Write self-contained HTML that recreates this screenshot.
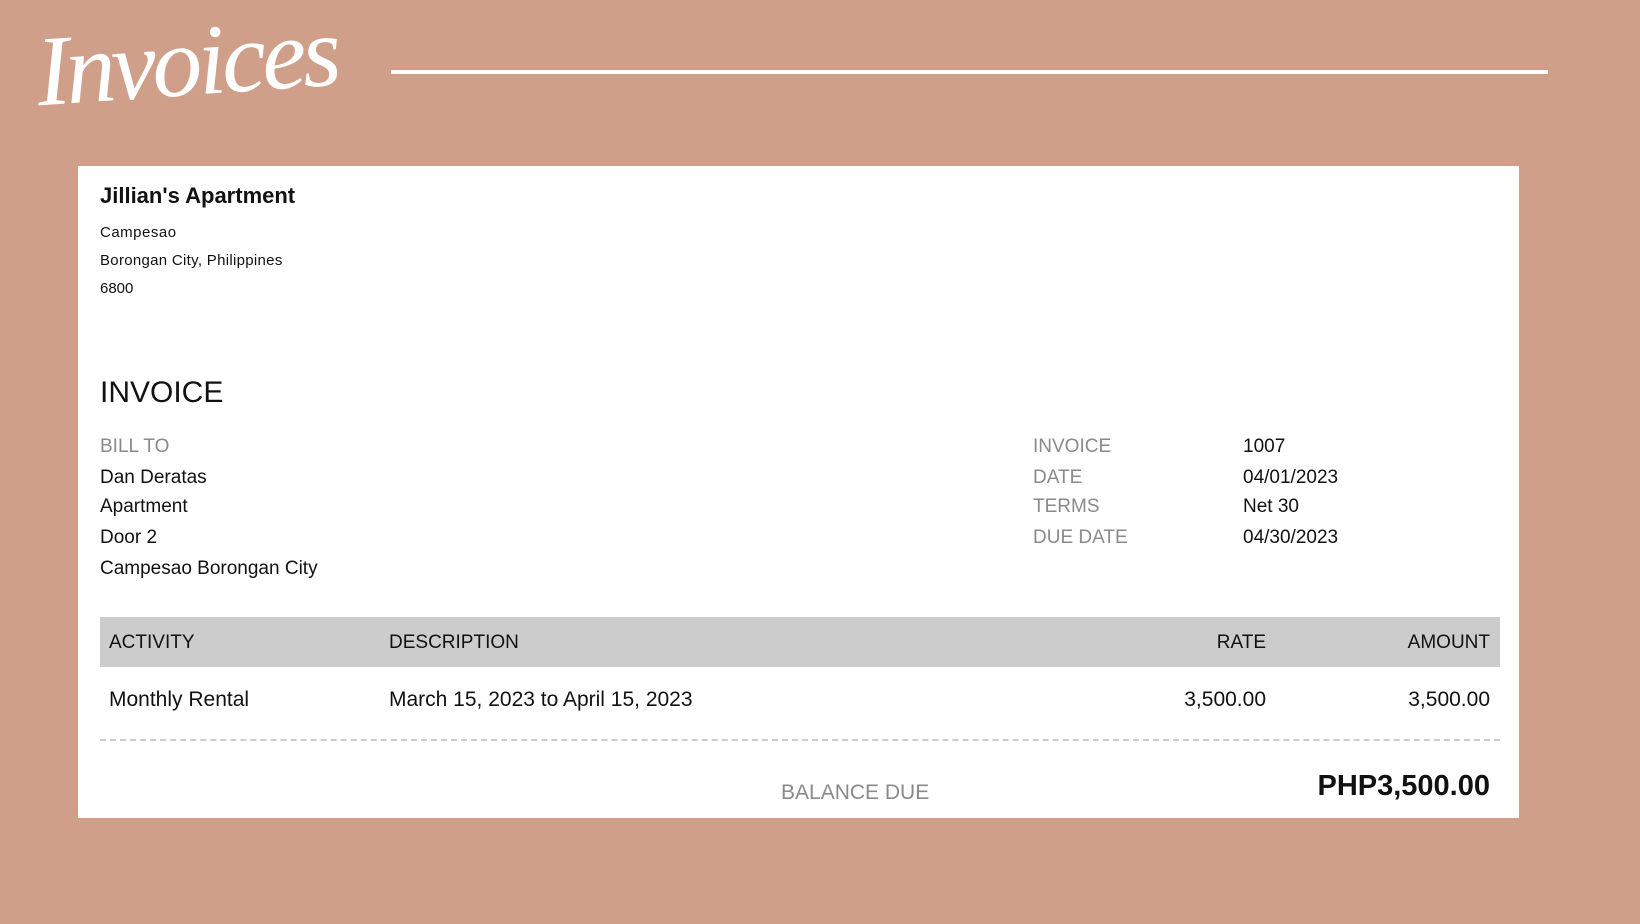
<!DOCTYPE html>
<html><head><meta charset="utf-8"><style>
*{margin:0;padding:0;box-sizing:border-box}
body{width:1640px;height:924px;background:#cf9f89;position:relative;overflow:hidden;font-family:"Liberation Sans",Arial,sans-serif;color:#111}
.a{position:absolute;white-space:nowrap}
.title{left:36px;top:4px;font-family:"Liberation Serif",serif;font-style:italic;font-size:100px;color:#fff;letter-spacing:-4px;transform:rotate(-4deg)}
.line{left:391px;top:70px;width:1157px;height:4px;background:#fff}
.card{left:78px;top:166px;width:1441px;height:652px;background:#fff}
.g{color:#8a8a8a}
.f19{font-size:19px;line-height:22px}
.hdr{left:100px;top:617px;width:1400px;height:50px;background:#cccccc}
.dash{left:100px;top:739px;width:1400px;border-top:2px dashed #ccc}
</style></head><body>
<div class="a title">Invoices</div>
<div class="a line"></div>
<div class="a card"></div>
<div class="a" style="left:100px;top:183px;font-size:22px;font-weight:bold">Jillian's Apartment</div>
<div class="a" style="left:100px;top:224px;font-size:15px;letter-spacing:0.5px">Campesao</div>
<div class="a" style="left:100px;top:252px;font-size:15px;letter-spacing:0.3px">Borongan City, Philippines</div>
<div class="a" style="left:100px;top:280px;font-size:15px">6800</div>
<div class="a" style="left:100px;top:376px;font-size:30px">INVOICE</div>
<div class="a f19 g" style="left:100px;top:436px">BILL TO</div>
<div class="a f19" style="left:100px;top:467px">Dan Deratas</div>
<div class="a f19" style="left:100px;top:496px">Apartment</div>
<div class="a f19" style="left:100px;top:527px">Door 2</div>
<div class="a f19" style="left:100px;top:558px">Campesao Borongan City</div>
<div class="a f19 g" style="left:1033px;top:436px">INVOICE</div>
<div class="a f19 g" style="left:1033px;top:467px">DATE</div>
<div class="a f19 g" style="left:1033px;top:496px">TERMS</div>
<div class="a f19 g" style="left:1033px;top:527px">DUE DATE</div>
<div class="a f19" style="left:1243px;top:436px">1007</div>
<div class="a f19" style="left:1243px;top:467px">04/01/2023</div>
<div class="a f19" style="left:1243px;top:496px">Net 30</div>
<div class="a f19" style="left:1243px;top:527px">04/30/2023</div>
<div class="a hdr"></div>
<div class="a f19" style="left:109px;top:632px">ACTIVITY</div>
<div class="a f19" style="left:389px;top:632px">DESCRIPTION</div>
<div class="a f19" style="right:374px;top:632px">RATE</div>
<div class="a f19" style="right:150px;top:632px">AMOUNT</div>
<div class="a" style="left:109px;top:688px;font-size:21px">Monthly Rental</div>
<div class="a" style="left:389px;top:688px;font-size:21px">March 15, 2023 to April 15, 2023</div>
<div class="a" style="right:374px;top:688px;font-size:21px">3,500.00</div>
<div class="a" style="right:150px;top:688px;font-size:21px">3,500.00</div>
<div class="a dash"></div>
<div class="a g" style="left:781px;top:781px;font-size:21px">BALANCE DUE</div>
<div class="a" style="right:150px;top:770px;font-size:29px;font-weight:bold">PHP3,500.00</div>
</body></html>
